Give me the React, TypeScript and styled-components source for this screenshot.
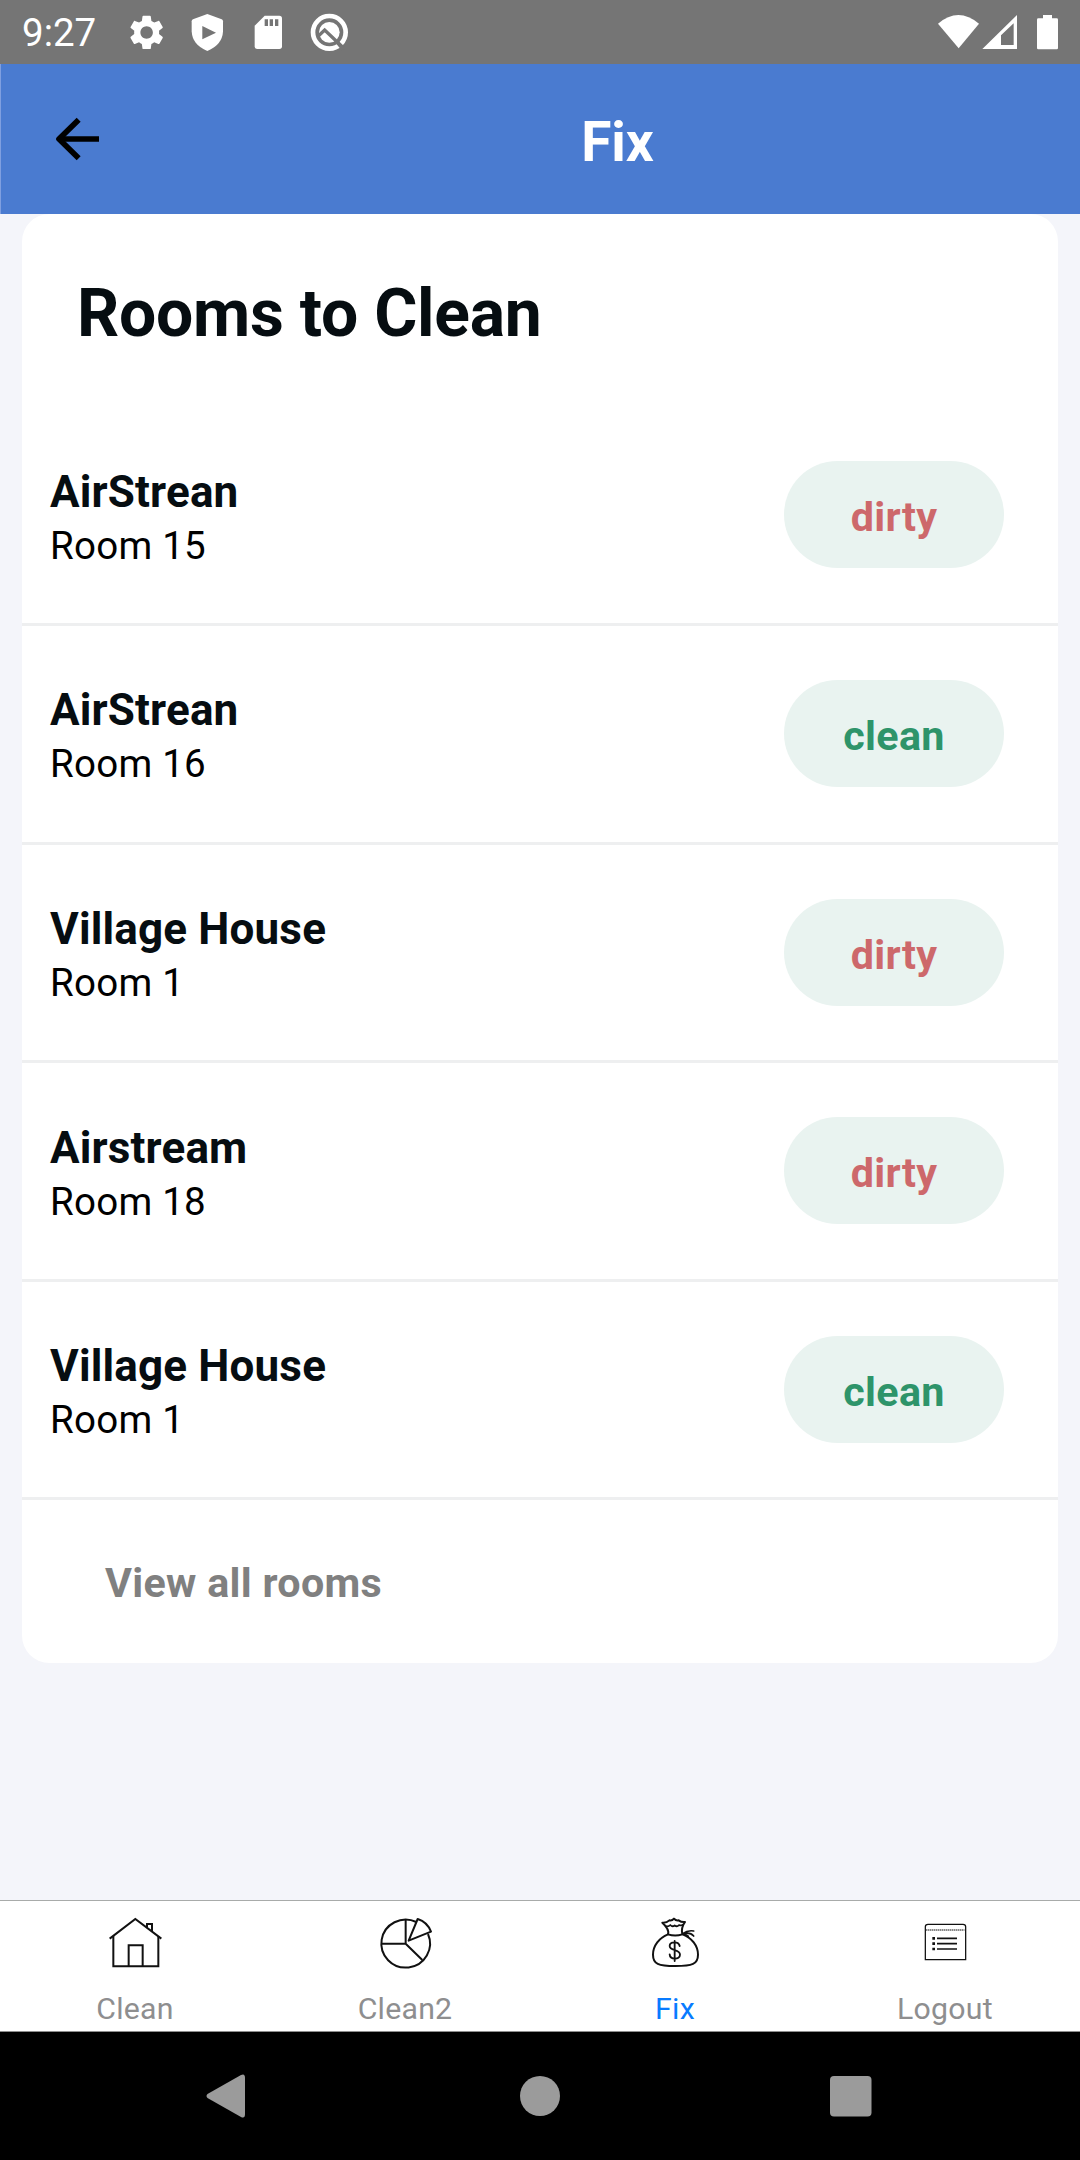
import React from "react";
import styled, { createGlobalStyle } from "styled-components";

const GlobalStyle = createGlobalStyle`
  *, *::before, *::after { box-sizing: border-box; }
  body { margin: 0; background: #f4f5fa; }
  svg { display: block; flex: none; }
`;

const Screen = styled.div`
  display: flex;
  flex-direction: column;
  width: 1080px;
  height: 2160px;
  overflow: hidden;
  background: #f4f5fa;
  font-family: Roboto, "Liberation Sans", sans-serif;
  color: #060d11;
`;

const StatusBar = styled.header`
  display: flex;
  align-items: center;
  justify-content: space-between;
  height: 64px;
  padding: 0 18px 0 22px;
  background: #757575;
  color: #fff;
`;

const StatusGroup = styled.div`
  display: flex;
  align-items: center;
  height: 64px;
`;

const Clock = styled.time`
  width: 98px;
  padding-top: 2px;
  font-size: 38.5px;
  line-height: 66px;
`;

const Header = styled.div`
  display: flex;
  align-items: center;
  height: 150px;
  background: #4a7bd0;
  box-shadow: inset 1px 0 #7f9fe0;
`;

const BackButton = styled.button`
  display: flex;
  align-items: center;
  width: 155px;
  height: 150px;
  padding: 0 0 0 50px;
  border: 0;
  background: none;
`;

const HeaderTitle = styled.h1`
  flex: 1;
  margin: 0;
  padding-top: 6px;
  text-align: center;
  font-size: 55px;
  font-weight: 700;
  line-height: 66px;
  color: #fff;
`;

const Content = styled.main`
  flex: 1;
  min-height: 0;
  padding: 0 22px;
`;

const Card = styled.section`
  display: flex;
  flex-direction: column;
  height: 1449px;
  border-radius: 27.5px;
  background: #fff;
`;

const CardTitle = styled.h2`
  height: 193.4px;
  margin: 0;
  padding: 61px 55px 0;
  font-size: 66px;
  font-weight: 700;
  line-height: 78px;
  letter-spacing: -0.25px;
`;

const Row = styled.div`
  display: flex;
  justify-content: space-between;
  height: 218.6px;
  padding: 54px 54px 0 28px;
  border-bottom: 3px solid #eeeff0;
`;

const RoomInfo = styled.div`
  padding-top: 4.5px;
`;

const Place = styled.div`
  font-size: 44px;
  font-weight: 700;
  line-height: 52px;
  letter-spacing: 0.16px;
`;

const Room = styled.div`
  padding-top: 3px;
  font-size: 38.5px;
  line-height: 50px;
  letter-spacing: 0.25px;
  color: #000;
`;

const Badge = styled.div<{ $clean: boolean }>`
  width: 220px;
  height: 107px;
  padding-top: 4px;
  border-radius: 54px;
  background: #e9f3f0;
  text-align: center;
  font-size: 41.25px;
  font-weight: 700;
  line-height: 104px;
  letter-spacing: 0.35px;
  color: ${(p) => (p.$clean ? "#2e946a" : "#cd686b")};
`;

const ViewAll = styled.a`
  padding: 58px 83px 0;
  font-size: 41.25px;
  font-weight: 700;
  line-height: 50px;
  letter-spacing: 0.3px;
  color: #808080;
`;

const TabBar = styled.nav`
  display: flex;
  height: 132px;
  border-top: 1px solid #a8abaa;
  border-bottom: 1px solid #8e8e8e;
  background: #fff;
`;

const Tab = styled.a<{ $active?: boolean }>`
  display: flex;
  flex: 1;
  flex-direction: column;
  align-items: center;
  padding-top: 14px;
  font-size: 30.25px;
  line-height: 36px;
  letter-spacing: 0.25px;
  color: ${(p) => (p.$active ? "#087bff" : "#8e8e8f")};

  span { margin-top: 21px; }
`;

const SystemNav = styled.footer`
  display: flex;
  align-items: center;
  justify-content: space-between;
  height: 128px;
  padding: 0 208px 0 206px;
  background: #000;
`;

type RoomEntry = { place: string; room: string; status: "dirty" | "clean" };

const rooms: RoomEntry[] = [
  { place: "AirStrean", room: "Room 15", status: "dirty" },
  { place: "AirStrean", room: "Room 16", status: "clean" },
  { place: "Village House", room: "Room 1", status: "dirty" },
  { place: "Airstream", room: "Room 18", status: "dirty" },
  { place: "Village House", room: "Room 1", status: "clean" },
];

const NoticeIcons = () => (
  <svg width="232" height="40" viewBox="360 36 696 120" fill="#fff">
    <g transform="translate(377.5 35) scale(5.2)">
      <path d="M19.14 12.94c.04-.3.06-.61.06-.94 0-.32-.02-.64-.07-.94l2.03-1.58c.18-.14.23-.41.12-.61l-1.92-3.32c-.12-.22-.37-.29-.59-.22l-2.39.96c-.5-.38-1.03-.7-1.62-.94l-.36-2.54c-.04-.24-.24-.41-.48-.41h-3.84c-.24 0-.43.17-.47.41l-.36 2.54c-.59.24-1.13.57-1.62.94l-2.39-.96c-.22-.08-.47 0-.59.22L2.74 8.87c-.12.21-.08.47.12.61l2.03 1.58c-.05.3-.09.63-.09.94s.02.64.07.94l-2.03 1.58c-.18.14-.23.41-.12.61l1.92 3.32c.12.22.37.29.59.22l2.39-.96c.5.38 1.03.7 1.62.94l.36 2.54c.05.24.24.41.48.41h3.84c.24 0 .44-.17.47-.41l.36-2.54c.59-.24 1.13-.56 1.62-.94l2.39.96c.22.08.47 0 .59-.22l1.92-3.32c.12-.22.07-.47-.12-.61l-2.01-1.58zM12 15.6c-1.98 0-3.6-1.62-3.6-3.6s1.62-3.6 3.6-3.6 3.6 1.62 3.6 3.6-1.62 3.6-3.6 3.6z" />
    </g>
    <path d="M622 42 L665 58 Q669 60 669 64 V94 Q667 135 622 153 Q577 135 575 94 V64 Q575 60 579 58Z" />
    <path d="M607 78 V118 L648 98Z" fill="#757575" />
    <path d="M794 47 H838 Q846 47 846 55 V139 Q846 147 838 147 H772 Q764 147 764 139 V77Z" />
    <path d="M794 58h10v20h-10zM809 58h10v20h-10zM825 58h10v20h-10z" fill="#757575" />
    <circle cx="988" cy="97" r="49" fill="none" stroke="#fff" strokeWidth="14" />
    <circle cx="988" cy="97" r="31" />
    <path d="M955 108 L974 90 L1030 143" fill="none" stroke="#757575" strokeWidth="10" />
    <path d="M1013 128 L1030 149" stroke="#757575" strokeWidth="11" />
  </svg>
);

const SignalIcons = () => (
  <svg width="128" height="40" viewBox="102 36 384 120" fill="#fff">
    <path d="M114 71 Q175 19 237 71 L176 145Z" />
    <path fillRule="evenodd" d="M351 45 V147 H247Z M341 70 L303 106 V135 H341Z" />
    <path d="M429 45h27v10h14q4 0 4 4v85q0 4-4 4h-55q-4 0-4-4V59q0-4 4-4h14z" />
  </svg>
);

const BackArrow = () => (
  <svg width="54" height="48" viewBox="150 345 162 144" fill="none" stroke="#000" strokeWidth="17">
    <path d="M297 417 H178" />
    <path d="M236 359 L177 417 L236 475" strokeLinejoin="round" />
  </svg>
);

const ink = { fill: "none", stroke: "#111", strokeWidth: 6 };

const HouseIcon = () => (
  <svg width="60" height="55" viewBox="75 75 180 165" {...ink}>
    <path d="M89 146 L166 87 L244 146" />
    <path d="M100 138 V229 H235 V138" />
    <path d="M146 229 V166 H188 V229" />
    <path d="M201 112 V102 H216 V124" />
  </svg>
);

const PieIcon = () => (
  <svg width="60" height="55" viewBox="885 75 180 165" {...ink}>
    <path d="M1009 96 A73 72 0 1 0 1044 132" />
    <path d="M977 89 V161 H904 M977 161 L1027 210" />
    <path d="M986 152 L1013 87 Q1042 96 1053 125Z" strokeLinejoin="round" />
  </svg>
);

const MoneyBagIcon = () => (
  <svg width="60" height="55" viewBox="75 75 180 165" {...ink} strokeLinecap="round" strokeLinejoin="round">
    <path d="M144 133 C118 143 99 167 99 194 C99 222 115 228 166 228 C217 228 234 222 234 194 C234 167 215 143 188 133" />
    <path d="M144 133 Q149 118 127 98 Q140 99 148 91 Q156 93 162 86 Q168 93 176 91 Q184 97 195 96 Q182 114 187 133 Q166 140 144 133Z" />
    <path d="M136 107 Q144 112 151 105 Q157 112 164 106 Q171 112 177 105 Q183 108 188 104" strokeWidth="5" />
    <path d="M188 131 Q203 120 221 123 M188 132 Q210 125 221 138 M190 132 Q200 133 205 139" strokeWidth="5" />
    <path d="M179 168 C176 153 149 154 149 168 C149 184 180 177 180 194 C180 210 150 210 149 193 M164 153 V213" strokeWidth="5.5" />
  </svg>
);

const ListIcon = () => (
  <svg width="60" height="55" viewBox="885 75 180 165" {...ink} strokeWidth={3.8}>
    <path d="M916 209 V110 Q916 103 924 103 H1029 Q1037 103 1037 110 V209Z" />
    <path d="M919 120 H1034" strokeWidth="5" strokeDasharray="3 3" />
    <path d="M951 145 H1011 M951 161 H1011 M951 177 H1011" strokeWidth="5" />
    <path d="M937 145 h8 M937 161 h8 M937 177 h8" strokeWidth="8" />
  </svg>
);

const tabs = [
  { label: "Clean", Icon: HouseIcon },
  { label: "Clean2", Icon: PieIcon },
  { label: "Fix", Icon: MoneyBagIcon, active: true },
  { label: "Logout", Icon: ListIcon },
];

export default function App() {
  return (
    <>
      <GlobalStyle />
      <Screen>
        <StatusBar>
          <StatusGroup>
            <Clock>9:27</Clock>
            <NoticeIcons />
          </StatusGroup>
          <StatusGroup>
            <SignalIcons />
          </StatusGroup>
        </StatusBar>
        <Header>
          <BackButton aria-label="Back">
            <BackArrow />
          </BackButton>
          <HeaderTitle>Fix</HeaderTitle>
        </Header>
        <Content>
          <Card>
            <CardTitle>Rooms to Clean</CardTitle>
            {rooms.map((r, i) => (
              <Row key={i}>
                <RoomInfo>
                  <Place>{r.place}</Place>
                  <Room>{r.room}</Room>
                </RoomInfo>
                <Badge $clean={r.status === "clean"}>{r.status}</Badge>
              </Row>
            ))}
            <ViewAll>View all rooms</ViewAll>
          </Card>
        </Content>
        <TabBar>
          {tabs.map(({ label, Icon, active }) => (
            <Tab key={label} $active={active}>
              <Icon />
              <span>{label}</span>
            </Tab>
          ))}
        </TabBar>
        <SystemNav>
          <svg width="44" height="44" viewBox="0 0 44 44" fill="#9b9b9b">
            <path d="M1.5 20 L35 1 Q39 -1 39 4 V40 Q39 45 35 43 L1.5 24 Q-.5 22 1.5 20Z" />
          </svg>
          <svg width="40" height="40" viewBox="0 0 40 40" fill="#9b9b9b">
            <circle cx="20" cy="20" r="20" />
          </svg>
          <svg width="42" height="41" viewBox="0 0 42 41" fill="#9b9b9b">
            <rect width="41.5" height="40.5" rx="4" />
          </svg>
        </SystemNav>
      </Screen>
    </>
  );
}
